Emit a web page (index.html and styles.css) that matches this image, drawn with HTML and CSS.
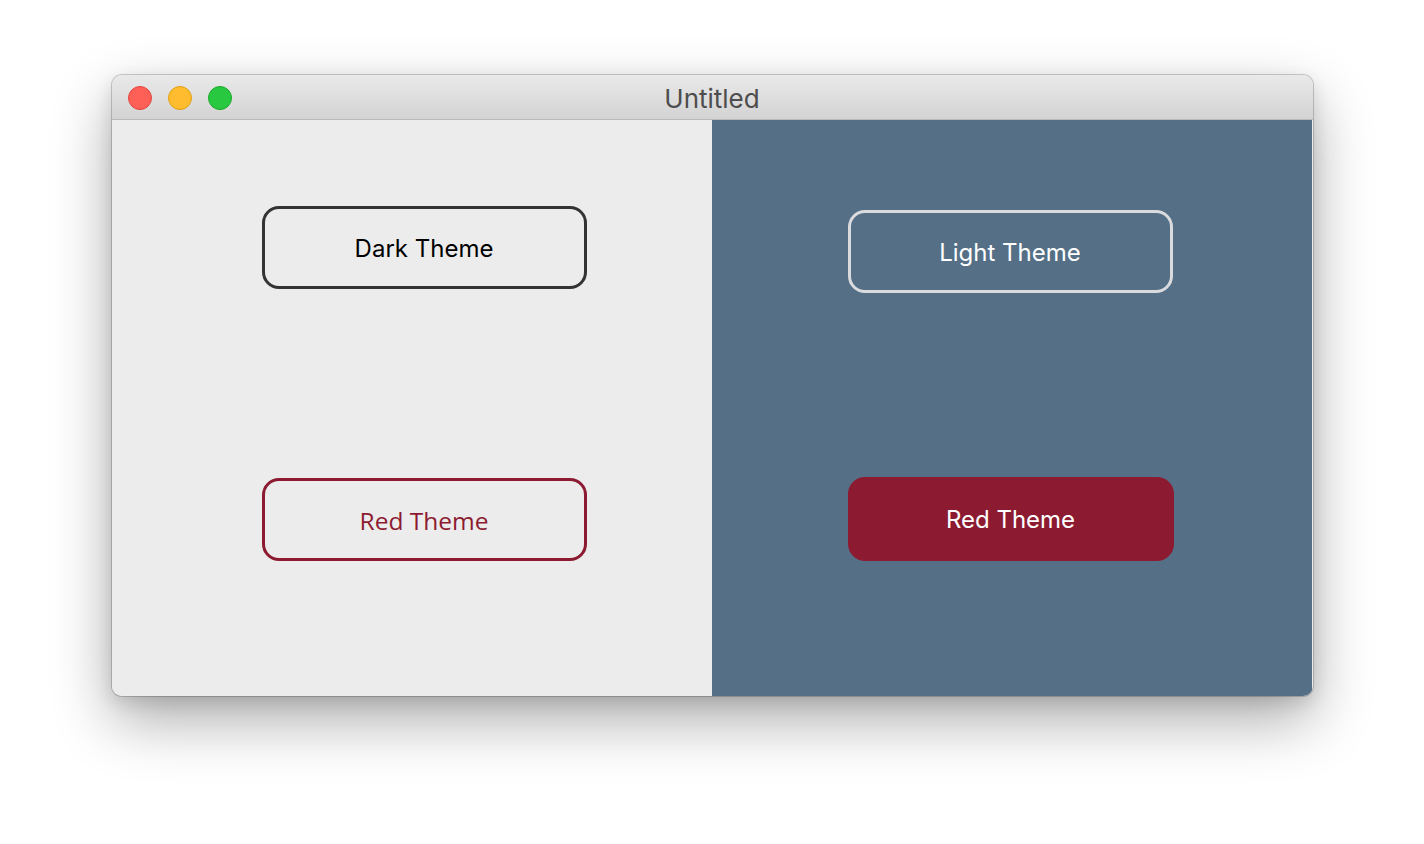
FILE: index.html
```html
<!DOCTYPE html>
<html>
<head>
<meta charset="utf-8">
<title>Untitled</title>
<link rel="stylesheet" href="styles.css">
</head>
<body>
<div class="stage">
  <div class="window">
    <div class="titlebar">
      <div class="lights">
        <span class="light red"></span>
        <span class="light yellow"></span>
        <span class="light green"></span>
      </div>
      <div class="title">Untitled</div>
    </div>
    <div class="content">
      <div class="panel panel-light">
        <button class="btn btn-dark">Dark Theme</button>
        <button class="btn btn-red-outline">Red Theme</button>
      </div>
      <div class="panel panel-blue">
        <button class="btn btn-light">Light Theme</button>
        <button class="btn btn-red-fill">Red Theme</button>
      </div>
    </div>
  </div>
</div>
</body>
</html>
```

FILE: styles.css
```css
html, body {
  margin: 0;
  padding: 0;
  background: #ffffff;
  width: 1424px;
  height: 844px;
  overflow: hidden;
}

.stage {
  display: flex;
  justify-content: center;
  padding-top: 75px;
}

.window {
  width: 1201px;
  height: 621px;
  border-radius: 10px;
  overflow: hidden;
  display: flex;
  flex-direction: column;
  box-shadow: 0 0 0 1px rgba(0, 0, 0, 0.18), 0 24px 60px rgba(0, 0, 0, 0.33), 0 6px 18px rgba(0, 0, 0, 0.12);
  background: #ececec;
}

.titlebar {
  position: relative;
  height: 44px;
  flex: none;
  background: linear-gradient(#e9e9e9, #d3d3d3);
  border-bottom: 1px solid #b8b8b8;
  display: flex;
  align-items: center;
  justify-content: center;
}

.lights {
  position: absolute;
  left: 16px;
  top: 11px;
  display: flex;
  gap: 16px;
}

.light {
  width: 24px;
  height: 24px;
  border-radius: 50%;
  box-sizing: border-box;
}

.light.red { background: #fe5f57; border: 1px solid #e2463f; }
.light.yellow { background: #febc2e; border: 1px solid #e1a116; }
.light.green { background: #28c840; border: 1px solid #1aab29; }

.title {
  font-family: Inter, "Liberation Sans", sans-serif;
  font-size: 26px;
  color: #4d4d4d;
  line-height: 1;
  padding-top: 3px;
}

.content {
  flex: 1;
  display: grid;
  grid-template-columns: 600px 600px;
}

.panel {
  display: flex;
  flex-direction: column;
  align-items: flex-start;
}

.panel-light {
  background: #ececec;
  padding: 86px 0 0 150px;
  gap: 189px;
}

.panel-blue {
  background: #546f86;
  padding: 90px 0 0 136px;
  gap: 185px;
}

.btn {
  width: 325px;
  height: 83px;
  box-sizing: border-box;
  border-radius: 17px;
  background: transparent;
  font-family: Inter, "Liberation Sans", sans-serif;
  font-size: 24px;
  display: flex;
  align-items: center;
  justify-content: center;
  padding: 1px 0 0 0;
  margin: 0;
}

.btn-dark {
  border: 3px solid #333333;
  color: #000000;
}

.btn-light {
  border: 3px solid #d9dbde;
  color: #ffffff;
}

.btn-red-outline {
  border: 3px solid #8c1b31;
  color: #8c1b31;
  font-family: "Open Sans", "Noto Sans", sans-serif;
  font-size: 24.5px;
}

.btn-red-fill {
  border: none;
  width: 326px;
  height: 84px;
  margin-top: -1px;
  background: #8c1b31;
  color: #ffffff;
}
```
